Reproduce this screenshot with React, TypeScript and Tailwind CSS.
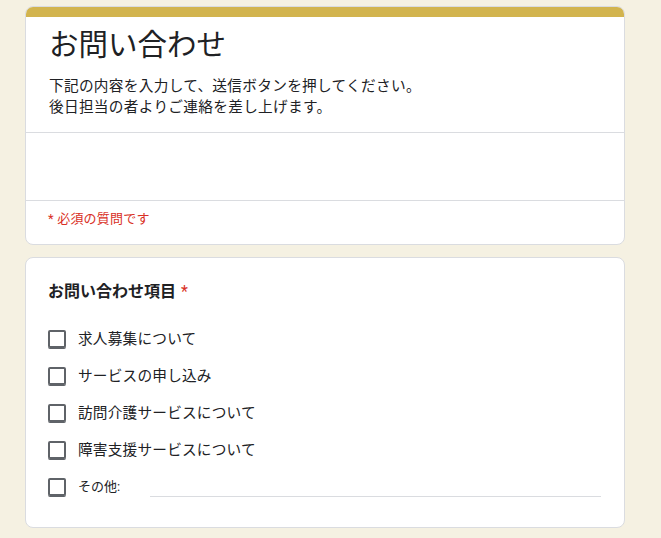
import React from "react";

const options = [
  "求人募集について",
  "サービスの申し込み",
  "訪問介護サービスについて",
  "障害支援サービスについて",
];

function Box() {
  return (
    <span className="block w-[18px] h-[18px] shrink-0 rounded-[2px] border-2 border-[#5f6368] shadow-[0_1px_0_#5f6368]" />
  );
}

export default function App() {
  return (
    <div
      className="min-h-[538px] w-full bg-[#f5f1e2] pt-[6px] text-[#202124]"
      style={{ fontFamily: "Roboto, 'Noto Sans CJK JP', 'Noto Sans', sans-serif" }}
    >
      <div className="ml-[25px] w-[600px] flex flex-col gap-[12px]">
        {/* Header card */}
        <div className="rounded-[8px] border border-[#dadce0] bg-white overflow-hidden">
          <div className="h-[10px] bg-[#d2b44e]" />
          <div className="px-[23px] pt-[8px] pb-[14px]">
            <div className="text-[29.5px] leading-[40px]">お問い合わせ</div>
            <div className="mt-[11px] text-[14.67px] leading-[21px] tracking-[0.3px]">
              下記の内容を入力して、送信ボタンを押してください。
              <br />
              後日担当の者よりご連絡を差し上げます。
            </div>
          </div>
          <div className="h-[68px] border-t border-[#dadce0]" />
          <div className="border-t border-[#dadce0] px-[22px] pt-[8px] pb-[15px] text-[13px] leading-[20px] tracking-[0.2px] text-[#d93025]">
            * 必須の質問です
          </div>
        </div>

        {/* Question card */}
        <div className="rounded-[8px] border border-[#dadce0] bg-white px-[22px] pt-[22px] pb-[22px]">
          <div className="text-[16px] leading-[24px] font-bold">
            お問い合わせ項目<span className="ml-[5px] font-normal text-[#d93025]">*</span>
          </div>
          <div className="mt-[16px] flex flex-col">
            {options.map((o) => (
              <div key={o} className="h-[37px] flex items-center gap-[12px]">
                <Box />
                <span className="text-[14.67px] leading-[20px] tracking-[0.2px]">{o}</span>
              </div>
            ))}
            <div className="h-[37px] flex items-center gap-[12px]">
              <Box />
              <span className="text-[13px] leading-[20px] w-[60px]">その他:</span>
              <div className="flex-1 self-end mb-[8px] mr-[1px] border-b border-[#dadce0]" />
            </div>
          </div>
        </div>
      </div>
    </div>
  );
}
